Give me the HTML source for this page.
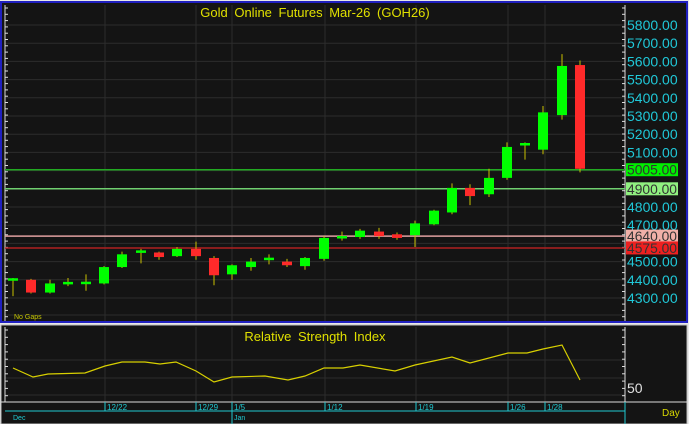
<!DOCTYPE html>
<html><head><meta charset="utf-8"><style>
html,body{margin:0;padding:0;background:#d8d8d8;}
svg{display:block;font-family:"Liberation Sans",sans-serif;}
</style></head><body>
<svg id="s" width="689" height="424" xmlns="http://www.w3.org/2000/svg">
<rect x="0" y="0" width="689" height="424" fill="#e8e8e8"/>
<rect x="1" y="2" width="686" height="320" fill="#141414" stroke="#2020c0" stroke-width="2"/>
<rect x="1" y="325" width="686" height="99" fill="#141414" stroke="#bbbbbb" stroke-width="1"/>
<g id="g"></g>
<text x="315" y="17" fill="#e0e000" font-size="13" text-anchor="middle" word-spacing="3">Gold Online Futures Mar-26 (GOH26)</text>
<text x="315" y="341" fill="#e0e000" font-size="13" text-anchor="middle" word-spacing="3">Relative Strength Index</text>
<text x="14" y="319" fill="#c8c800" font-size="7">No Gaps</text>
<text x="627" y="393" fill="#e0e0e0" font-size="14">50</text>
<text x="662" y="416" fill="#d8d800" font-size="10">Day</text>
</svg>
<script>
var g=document.getElementById('g'),h='';
function Y(p){return 25+(5800-p)*0.182;}
var vx=[105,196,232,325,416,508,545];
vx.forEach(function(x){h+='<line x1="'+x+'" y1="5" x2="'+x+'" y2="321" stroke="#2c2c2c"/><line x1="'+x+'" y1="327" x2="'+x+'" y2="402" stroke="#2c2c2c"/>';});
for(var p=4300;p<=5800;p+=100){var y=Y(p);h+='<line x1="5" y1="'+y+'" x2="625" y2="'+y+'" stroke="#2c2c2c"/>';
 if(p!=4900)h+='<text x="627" y="'+(y+5)+'" fill="#20c8d8" font-size="14">'+p+'.00</text>';}
h+='<line x1="5" y1="315" x2="625" y2="315" stroke="#2c2c2c"/>';
[360,378,395].forEach(function(y){h+='<line x1="5" y1="'+y+'" x2="625" y2="'+y+'" stroke="#2c2c2c"/>';});
for(var y=8;y<320;y+=6.3){h+='<line x1="5" y1="'+y+'" x2="8" y2="'+y+'" stroke="#ddd"/><line x1="622" y1="'+y+'" x2="625" y2="'+y+'" stroke="#ddd"/>';}
for(var y=330;y<400;y+=7.3){h+='<line x1="5" y1="'+y+'" x2="8" y2="'+y+'" stroke="#ddd"/><line x1="622" y1="'+y+'" x2="625" y2="'+y+'" stroke="#ddd"/>';}
h+='<line x1="5" y1="5" x2="5" y2="321" stroke="#ddd"/><line x1="625" y1="5" x2="625" y2="321" stroke="#ddd"/>';
h+='<line x1="5" y1="327" x2="5" y2="402" stroke="#ddd"/><line x1="625" y1="327" x2="625" y2="402" stroke="#ddd"/>';
var L=[[5005,'#22aa22','#00ee00'],[4900,'#70d070','#90f080'],[4640,'#e0a0a0','#f0b0a8'],[4575,'#b02020','#ee2020']];
L.forEach(function(l){var y=Y(l[0]);h+='<line x1="5" y1="'+y+'" x2="625" y2="'+y+'" stroke="'+l[1]+'" stroke-width="1.5"/>';
 h+='<rect x="626" y="'+(y-6.5)+'" width="52" height="13" fill="'+l[2]+'"/><text x="627" y="'+(y+5)+'" fill="#333" font-size="14" textLength="50" lengthAdjust="spacingAndGlyphs">'+l[0]+'.00</text>';});
var C=[[13,4400,4402,4310,4410],[31,4400,4330,4325,4405],[50,4330,4380,4325,4400],[68,4375,4382,4365,4410],[86,4378,4383,4340,4430],[104,4380,4470,4375,4475],[122,4470,4540,4465,4555],[141,4545,4555,4490,4570],[159,4550,4525,4510,4555],[177,4530,4570,4525,4580],[196,4570,4530,4510,4610],[214,4520,4425,4370,4530],[232,4430,4480,4400,4485],[251,4470,4500,4450,4520],[269,4505,4515,4485,4540],[287,4500,4480,4470,4515],[305,4475,4520,4455,4525],[324,4515,4630,4505,4640],[342,4628,4634,4615,4665],[360,4635,4670,4625,4680],[379,4665,4640,4625,4685],[397,4650,4630,4620,4660],[415,4645,4710,4580,4725],[434,4705,4780,4700,4785],[452,4770,4905,4760,4930],[470,4905,4860,4810,4925],[489,4870,4960,4855,5010],[507,4960,5130,4950,5155],[525,5135,5145,5060,5155],[543,5115,5320,5090,5355],[562,5305,5575,5280,5640],[580,5580,5010,4990,5605]];
C.forEach(function(c){var x=c[0],up=c[2]>=c[1],col=up?'#00ff00':'#ff2a2a';
 h+='<line x1="'+x+'" y1="'+Y(c[4])+'" x2="'+x+'" y2="'+Y(c[3])+'" stroke="#c8c000"/>';
 var t=Y(Math.max(c[1],c[2])),b=Y(Math.min(c[1],c[2]));if(b-t<2.5){t-=1.2;b=t+2.5;}
 h+='<rect x="'+(x-5)+'" y="'+t+'" width="10" height="'+(b-t)+'" fill="'+col+'"/>';});
var R=[[13,368],[33,377],[48,374],[85,373],[105,366],[122,362],[145,362],[160,364],[176,362],[196,371],[214,382],[232,377],[265,376],[288,380],[305,376],[324,368],[343,368],[360,365],[395,371],[415,365],[452,357],[470,363],[508,353],[527,353],[543,349],[562,345],[580,380]];
h+='<polyline fill="none" stroke="#d8d000" stroke-width="1.2" points="'+R.map(function(p){return p.join(',')}).join(' ')+'"/>';
h+='<line x1="1" y1="402" x2="687" y2="402" stroke="#dddddd"/>';
h+='<line x1="5" y1="411" x2="625" y2="411" stroke="#20c8d0"/><line x1="625" y1="402" x2="625" y2="424" stroke="#20c8d0"/><line x1="232" y1="411" x2="232" y2="424" stroke="#20c8d0"/>';
var D=[[105,'12/22'],[196,'12/29'],[232,'1/5'],[325,'1/12'],[416,'1/19'],[508,'1/26'],[545,'1/28']];
D.forEach(function(d){h+='<line x1="'+d[0]+'" y1="402" x2="'+d[0]+'" y2="411" stroke="#20c8d0"/><text x="'+(d[0]+2)+'" y="410" fill="#20c8d0" font-size="8">'+d[1]+'</text>';});
h+='<text x="13" y="420" fill="#20c8d0" font-size="7">Dec</text><text x="234" y="420" fill="#20c8d0" font-size="7">Jan</text>';
g.innerHTML=h;
</script>
</body></html>
